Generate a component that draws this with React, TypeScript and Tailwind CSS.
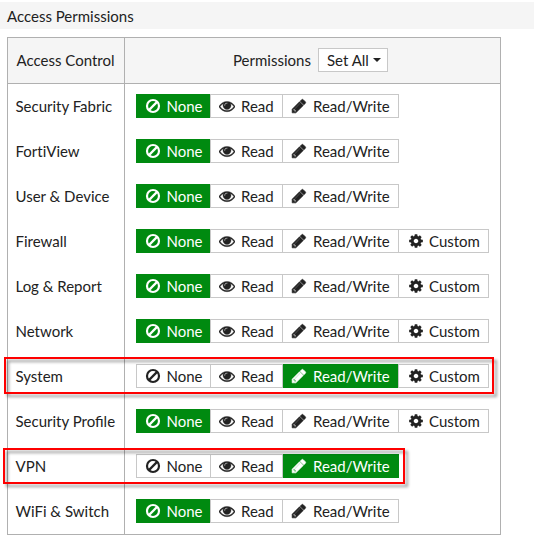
import type { ReactNode } from "react";

type Level = "none" | "read" | "write" | "custom";

interface Row {
  name: string;
  level: Level;
  custom?: boolean;
  mark?: string;
  plain?: boolean;
}

const rows: Row[] = [
  { name: "Security Fabric", level: "none" },
  { name: "FortiView", level: "none", plain: true },
  { name: "User & Device", level: "none" },
  { name: "Firewall", level: "none", custom: true },
  { name: "Log & Report", level: "none", custom: true },
  { name: "Network", level: "none", custom: true },
  { name: "System", level: "write", custom: true, mark: "-left-1 top-[3px] w-[490px] h-[37px]" },
  { name: "Security Profile", level: "none", custom: true },
  { name: "VPN", level: "write", mark: "-left-[5px] top-1 w-[402px] h-9" },
  { name: "WiFi & Switch", level: "none" },
];

const eyePath =
  "M1664 960q-152-236-381-353q61 104 61 225q0 185-131.5 316.5t-316.5 131.5t-316.5-131.5t-131.5-316.5q0-121 61-225q-229 117-381 353q133 205 333.5 326.5t434.5 121.5t434.5-121.5t333.5-326.5zM944 576q0-20-14-34t-34-14q-125 0-214.5 89.5t-89.5 214.5q0 20 14 34t34 14t34-14t14-34q0-86 61-147t147-61q20 0 34-14t14-34zM1792 960q0 34-20 69q-140 230-376.5 368.5t-499.5 138.5t-499.5-139t-376.5-368q-20-35-20-69t20-69q140-229 376.5-368t499.5-139t499.5 139t376.5 368q20 35 20 69z";
const gearPath =
  "M1152 896q0-106-75-181t-181-75-181 75-75 181 75 181 181 75 181-75 75-181zm512-109v222q0 12-8 23t-20 13l-185 28q-19 54-39 91 35 50 107 138 10 12 10 25t-9 23q-27 37-99 108t-94 71q-12 0-26-9l-138-108q-44 23-91 38-16 136-29 186-7 28-36 28h-222q-14 0-24.5-8.5t-11.5-21.5l-28-184q-49-16-90-37l-141 107q-10 9-25 9-14 0-25-11-126-114-165-168-7-10-7-23 0-12 8-23 15-21 51-66.5t54-70.5q-27-50-41-99l-183-27q-13-2-21-12.5t-8-23.5v-222q0-12 8-23t19-13l186-28q14-46 39-92-40-57-107-138-10-12-10-24 0-10 9-23 26-36 98.5-107.5t94.5-71.5q13 0 26 10l138 107q44-23 91-38 16-136 29-186 7-28 36-28h222q14 0 24.5 8.5t11.5 21.5l28 184q49 16 90 37l142-107q9-9 24-9 13 0 25 10 129 119 165 170 7 8 7 22 0 12-8 23-15 21-51 66.5t-54 70.5q26 50 41 98l183 28q13 2 21 12.5t8 23.5z";
const pencilPath =
  "M491 1536l91-91-235-235-91 91v107h128v128h107zm523-928q0-22-22-22-10 0-17 7l-542 542q-7 7-7 17 0 22 22 22 10 0 17-7l542-542q7-7 7-17zm-54-192l416 416-832 832h-416v-416zm683 96q0 53-37 90l-166 166-416-416 166-165q36-38 90-38 53 0 91 38l235 234q37 39 37 91z";

function Glyph({ path, weight = 0 }: { path: string; weight?: number }) {
  return (
    <svg
      viewBox="0 0 1792 1792"
      className="size-4 shrink-0"
      fill="currentColor"
      stroke="currentColor"
      strokeWidth={weight}
    >
      <path d={path} />
    </svg>
  );
}

function Ban() {
  return (
    <svg viewBox="0 0 16 16" className="size-4 shrink-0" fill="none" stroke="currentColor" strokeWidth="2.2">
      <circle cx="8" cy="8" r="6" />
      <path d="M3.9 12.1 12.1 3.9" />
    </svg>
  );
}

function Option({ active, className, children }: { active: boolean; className: string; children: ReactNode }) {
  return (
    <button
      className={`flex h-6 items-center whitespace-nowrap border-[#c8c8c8] ${
        active ? "bg-[#008a10] text-white" : "bg-white text-[#222]"
      } ${className}`}
    >
      {children}
    </button>
  );
}

function Options({ row }: { row: Row }) {
  const { level, custom } = row;
  return (
    <div className="flex">
      <Option active={level === "none"} className={`w-[74px] gap-[5.5px] ${level === "none" ? "pl-[9px]" : "border-y border-l pl-2"}`}>
        <Ban />
        <span>None</span>
      </Option>
      <Option active={level === "read"} className="w-[73px] gap-[6px] border pl-2">
        <Glyph path={eyePath} weight={40} />
        <span>Read</span>
      </Option>
      <Option active={level === "write"} className={`w-[116px] gap-[6px] pl-2 ${level === "write" ? "" : "border-y border-r"}`}>
        <Glyph path={pencilPath} weight={70} />
        <span>Read/Write</span>
      </Option>
      {custom && (
        <Option active={level === "custom"} className="-ml-px w-[91px] gap-[5px] border pl-[9px]">
          <Glyph path={gearPath} />
          <span>Custom</span>
        </Option>
      )}
    </div>
  );
}

export default function App() {
  return (
    <div className="h-[544px] w-[534px] overflow-hidden bg-white pt-0.5 font-['Lato',sans-serif] text-[15px] leading-5 text-[#222]">
      <h1 className="flex h-[27px] items-center bg-[#f5f5f5] pl-[7px]">Access Permissions</h1>
      <div className="ml-[7px] mt-2 w-[494px] border border-[#b0b0b0]">
        <div className="flex h-[46px] border-b border-[#b0b0b0] bg-[#f5f5f5]">
          <div className="flex w-[117px] items-center justify-center border-r border-[#b0b0b0] pb-0.5 pr-px">Access Control</div>
          <div className="flex flex-1 items-center pb-0.5 pl-[108px]">
            <span className="w-[85px]">Permissions</span>
            <button className="flex h-6 w-[70px] items-center gap-1 border border-[#c8c8c8] bg-white pl-2">
              <span className="whitespace-nowrap">Set All</span>
              <span className="border-x-4 border-t-4 border-x-transparent border-t-[#222]" />
            </button>
          </div>
        </div>
        {rows.map((row) => (
          <div key={row.name} className="relative flex h-[45px]">
            <div
              className={`flex w-[117px] items-center whitespace-nowrap border-r border-[#b0b0b0] pb-0.5 pl-[7.5px] ${
                row.plain ? "[font-variant-ligatures:none]" : "[font-variant-ligatures:normal]"
              }`}
            >
              {row.name}
            </div>
            <div className="flex items-start pl-[11px] pt-2.5">
              <Options row={row} />
            </div>
            {row.mark && (
              <div className={`absolute border-2 border-[#fe0000] drop-shadow-[3px_3px_1.5px_rgba(0,0,0,0.4)] ${row.mark}`} />
            )}
          </div>
        ))}
      </div>
    </div>
  );
}
